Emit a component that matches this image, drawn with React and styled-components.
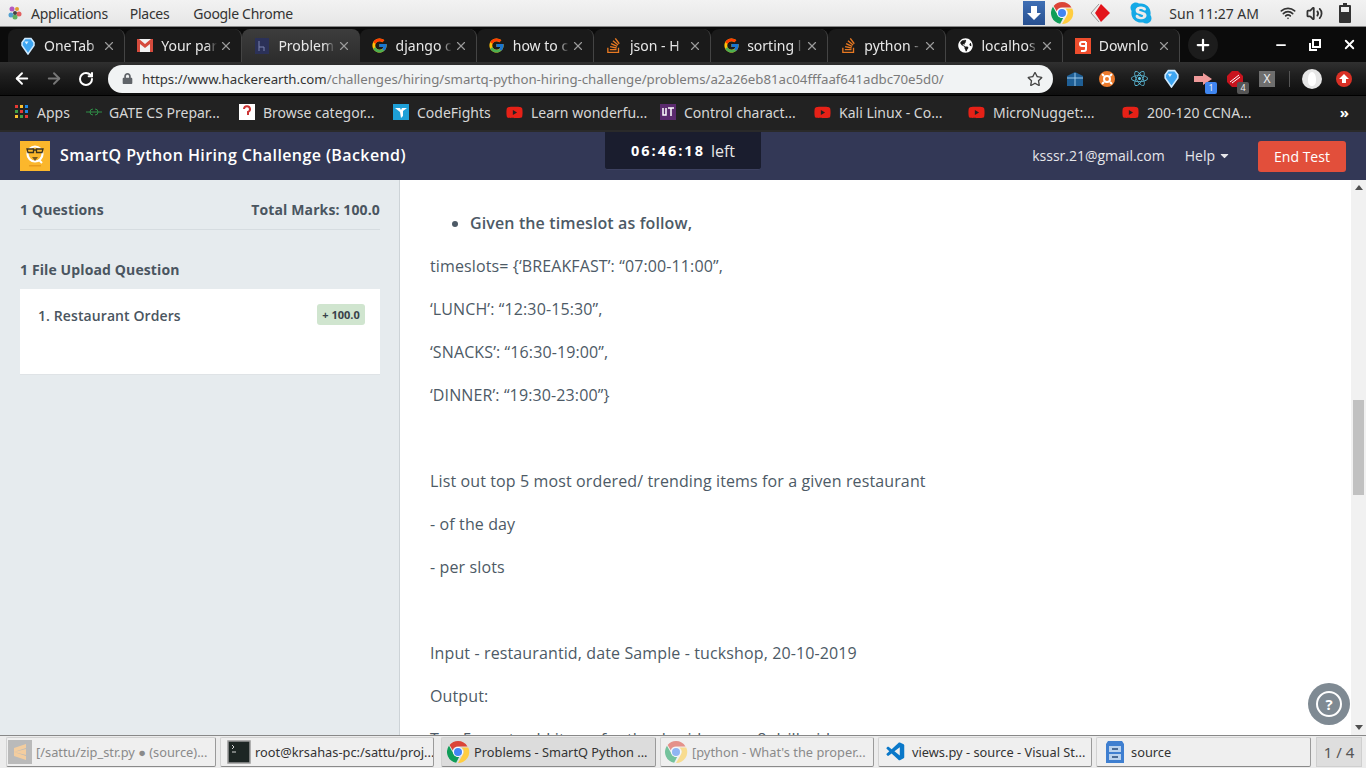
import styled, { createGlobalStyle } from 'styled-components';
import { FcGoogle } from 'react-icons/fc';
import { SiStackoverflow } from 'react-icons/si';
import { VscVscode } from 'react-icons/vsc';
import { FaGlobeAmericas, FaLock, FaRegStar, FaCaretDown, FaYoutube, FaReact, FaSkype } from 'react-icons/fa';
import { ArrowLeft, ArrowRight, RotateCw, X, Plus, Minus, Wifi, Volume2 } from 'lucide-react';

const GlobalStyle = createGlobalStyle`
html, body { margin: 0; padding: 0; overflow: hidden; }
* { box-sizing: border-box; }
body { font-family: "Noto Sans", sans-serif; }
`

const Screen = styled.div`
width: 1366px;
height: 768px;
display: flex;
flex-direction: column;
overflow: hidden;
background: #fff;
`
const TopBar = styled.div`
height: 27px;
flex: none;
display: flex;
align-items: center;
padding: 0 15px 0 7px;
background: linear-gradient(#f2f2f2, #e6e6e6);
border-bottom: 1px solid #888;
color: #3a3a3a;
font-size: 14px;
`
const MenuItem = styled.span`
margin-left: ${p => p.$gap}px;
color: #333;
letter-spacing: -0.3px;
`
const TrayArea = styled.div`
margin-left: auto;
display: flex;
align-items: center;
height: 100%;
`
const TrayClock = styled.span`
margin: 0 21px 0 16px;
color: #333;
`
const TrayDownload = styled.div`
width: 22px;
height: 24px;
margin-right: 5px;
background: linear-gradient(#3f6fb5, #274f8f);
display: flex;
align-items: center;
justify-content: center;
`
const Tabs = styled.div`
height: 35px;
flex: none;
display: flex;
align-items: flex-end;
background: #0b0b0b;
padding-left: 8px;
`
const Tab = styled.div`
width: 117.2px;
height: 33px;
flex: none;
padding: 0 8px 0 11px;
display: flex;
align-items: center;
gap: 7px;
border-radius: 8px 8px 0 0;
background: ${p => (p.$active ? 'linear-gradient(#3d3d3d, #2c2c2c)' : '#1a1a1a')};
border-right: 1px solid ${p => (p.$active ? 'transparent' : '#444')};
color: #e8e8e8;
font-size: 14px;
white-space: nowrap;
`
const TabTitle = styled.span`
flex: 1;
min-width: 0;
overflow: hidden;
-webkit-mask-image: linear-gradient(90deg, #000 82%, transparent);
mask-image: linear-gradient(90deg, #000 82%, transparent);
`
const TabIcon = styled.div`
width: 18px;
height: 18px;
flex: none;
display: flex;
align-items: center;
justify-content: center;
`
const TabClose = styled(X)`
flex: none;
margin-left: -5px;
color: #9a9a9a;
`
const NewTab = styled.div`
width: 30px;
height: 30px;
margin-left: 8px;
margin-bottom: 2px;
border-radius: 50%;
background: #1c1c1c;
display: flex;
align-items: center;
justify-content: center;
color: #fff;
`
const WindowButtons = styled.div`
margin-left: auto;
display: flex;
align-items: center;
gap: 21px;
height: 100%;
padding-right: 9px;
color: #fff;
`
const Toolbar = styled.div`
height: 34px;
flex: none;
display: flex;
align-items: center;
background: linear-gradient(#303030, #1f1f1f 40%, #0e0e0e);
border-bottom: 1px solid #000;
padding-left: 13px;
`
const NavButton = styled.div`
width: 18px;
margin-right: 14px;
display: flex;
justify-content: center;
color: ${p => (p.$off ? '#777' : '#fff')};
`
const Omnibox = styled.div`
width: 945px;
height: 28px;
margin-left: -1px;
padding: 0 10px 0 14px;
border-radius: 14px;
background: #f1f3f4;
display: flex;
align-items: center;
font-size: 13.25px;
color: #7a7a7a;
`
const UrlText = styled.span`
margin-left: 9px;
flex: 1;
white-space: nowrap;
letter-spacing: -0.025px;
`
const UrlHost = styled.span`
color: #333;
`
const Extensions = styled.div`
display: flex;
align-items: center;
padding-left: 6px;
`
const Ext = styled.div`
position: relative;
width: 32px;
height: 24px;
display: flex;
align-items: center;
justify-content: center;
`
const ExtBadge = styled.span`
position: absolute;
right: 2px;
bottom: -3px;
width: 12px;
height: 12px;
border-radius: 2px;
background: ${p => p.$bg};
color: #eee;
font-size: 9px;
line-height: 12px;
text-align: center;
`
const ExtX = styled.div`
width: 16px;
height: 16px;
background: #6e6e6e;
color: #eee;
font-size: 12px;
line-height: 16px;
text-align: center;
`
const ExtDivider = styled.div`
width: 1px;
height: 16px;
background: #555;
margin: 0 12px 0 6px;
`
const Avatar = styled.div`
width: 20px;
height: 20px;
border-radius: 50%;
background: #e6e6e6;
margin-right: 14px;
display: flex;
justify-content: center;
align-items: center;
`
const AvatarFace = styled.div`
width: 8px;
height: 14px;
border-radius: 50% 50% 40% 40%;
background: #fff;
`
const UpdateDot = styled.div`
width: 16px;
height: 16px;
border-radius: 50%;
background: #d93025;
display: flex;
align-items: center;
justify-content: center;
`
const Bookmarks = styled.div`
height: 34px;
flex: none;
display: flex;
align-items: center;
padding: 0 0 2px 15px;
background: #222;
color: #d6d6d6;
font-size: 14px;
white-space: nowrap;
`
const Bookmark = styled.div`
display: flex;
align-items: center;
width: ${p => p.$w}px;
flex: none;
gap: ${p => p.$gap || 8}px;
`
const MoreBookmarks = styled.span`
margin-left: auto;
margin-right: 17px;
color: #fff;
font-weight: 700;
font-size: 15px;
`
const AppsGrid = styled.div`
width: 14px;
height: 14px;
display: grid;
grid-template-columns: repeat(3, 3px);
grid-template-rows: repeat(3, 3px);
gap: 2px;
`
const AppsDot = styled.i`
background: ${p => p.$c};
`
const SiteHeader = styled.header`
height: 50px;
flex: none;
display: flex;
align-items: center;
border-top: 2px solid #2a2a2a;
background: #333856;
padding: 0 20px;
font-family: "Open Sans", sans-serif;
position: relative;
`
const Brand = styled.div`
width: 30px;
height: 30px;
background: #fbb72c;
display: flex;
align-items: center;
justify-content: center;
`
const ChallengeTitle = styled.h1`
margin: 0 0 2px 10px;
font-size: 16px;
font-weight: 600;
letter-spacing: 0.4px;
color: #fff;
`
const Timer = styled.div`
position: absolute;
left: 605px;
top: 0;
width: 156px;
height: 38px;
background: #1a1d2e;
border-radius: 0 0 3px 3px;
border-bottom: 1px solid #3d4160;
color: #e8e8e8;
display: flex;
align-items: center;
justify-content: center;
gap: 6px;
font-size: 16px;
`
const TimerValue = styled.b`
font-weight: 700;
font-size: 14.5px;
letter-spacing: 2px;
color: #fff;
`
const HeaderRight = styled.div`
margin-left: auto;
display: flex;
align-items: center;
font-size: 14px;
color: #e6e6ea;
`
const UserMail = styled.span`
margin-bottom: 2px;
`
const HelpMenu = styled.span`
margin: 0 27px 2px 20px;
display: flex;
align-items: center;
gap: 3px;
`
const EndButton = styled.button`
width: 88px;
height: 31px;
border: 0;
border-radius: 3px;
background: #e24f3b;
color: #fff;
font: 14px "Open Sans", sans-serif;
`
const Main = styled.div`
flex: 1;
min-height: 0;
display: flex;
font-family: "Open Sans", sans-serif;
position: relative;
`
const Sidebar = styled.aside`
width: 400px;
flex: none;
background: #e6ebee;
border-right: 1px solid #cdd3d7;
padding: 0 19px 0 20px;
color: #4a5560;
`
const SummaryRow = styled.div`
height: 50px;
padding-top: 10px;
display: flex;
align-items: center;
justify-content: space-between;
border-bottom: 1px solid #d6dce0;
font-size: 14px;
font-weight: 700;
letter-spacing: 0.12px;
`
const SectionTitle = styled.div`
margin-top: 30px;
height: 29px;
font-size: 14px;
font-weight: 700;
line-height: 20px;
letter-spacing: 0.12px;
`
const QuestionCard = styled.div`
height: 86px;
background: #fff;
border-bottom: 1px solid #dfe3e6;
padding: 15px 15px 0 18px;
display: flex;
justify-content: space-between;
align-items: flex-start;
font-size: 14px;
font-weight: 600;
`
const QuestionName = styled.span`
margin-top: 1px;
line-height: 22px;
letter-spacing: 0.1px;
`
const Marks = styled.span`
width: 48px;
height: 21px;
border-radius: 3px;
background: #d0e5cf;
color: #39424a;
font-size: 11px;
font-weight: 700;
line-height: 21px;
text-align: center;
`
const Content = styled.main`
flex: 1;
min-width: 0;
overflow: hidden;
padding: 31px 30px 0;
color: #4d5a66;
font-size: 16px;
line-height: 25px;
letter-spacing: 0.12px;
`
const Bullets = styled.ul`
margin: 0 0 18px;
padding-left: 40px;
`
const Bullet = styled.li`
font-weight: 600;
`
const Para = styled.p`
margin: 0 0 18px;
min-height: 25px;
white-space: nowrap;
`
const ScrollBar = styled.div`
width: 15px;
flex: none;
background: #f1f1f1;
display: flex;
flex-direction: column;
align-items: center;
justify-content: space-between;
position: relative;
`
const ScrollArrow = styled.div`
width: 0;
height: 0;
margin: 5px 0;
border-left: 4px solid transparent;
border-right: 4px solid transparent;
border-${p => (p.$up ? 'bottom' : 'top')}: 5px solid #505050;
`
const ScrollThumb = styled.div`
position: absolute;
top: 220px;
left: 2px;
width: 11px;
height: 95px;
background: #c1c1c1;
`
const HelpFab = styled.div`
position: absolute;
left: 1308px;
top: 503px;
width: 42px;
height: 42px;
border-radius: 50%;
background: #7f8a93;
display: flex;
align-items: center;
justify-content: center;
`
const HelpRing = styled.div`
width: 26px;
height: 26px;
border: 2px solid #fff;
border-radius: 50%;
color: #fff;
font-size: 15px;
font-weight: 700;
line-height: 22px;
text-align: center;
`
const Taskbar = styled.div`
height: 33px;
flex: none;
display: flex;
align-items: center;
padding: 1px 4px 1px 6px;
background: #ececec;
border-top: 1px solid #888;
font-size: 12.8px;
letter-spacing: 0.01px;
color: #333;
`
const TaskButton = styled.div`
width: ${p => p.$w}px;
margin-right: ${p => p.$mr}px;
height: 30px;
flex: none;
display: flex;
align-items: center;
gap: 4px;
padding: 0 2px 0 ${p => p.$pl}px;
border-radius: 2px;
background: ${p => (p.$active ? '#dcdcdc' : '#efefef')};
border: 1px solid #d2d2d2;
border-right-color: #9a9a9a;
border-bottom-color: #8a8a8a;
white-space: nowrap;
overflow: hidden;
color: ${p => (p.$faded ? '#8a8a8a' : '#333')};
`
const TaskIcon = styled.div`
width: 24px;
height: 24px;
flex: none;
display: flex;
align-items: center;
justify-content: center;
opacity: ${p => (p.$faded ? 0.55 : 1)};
`
const Pager = styled.div`
width: 46px;
height: 30px;
margin-left: auto;
background: #dedede;
border: 1px solid #cfcfcf;
display: flex;
align-items: center;
justify-content: center;
font-size: 15px;
color: #555;
white-space: nowrap;
`

function ChromeIcon({ size = 18 }) {
    return (
        <svg width={size} height={size} viewBox="0 0 48 48">
            <path fill="#db4437" d="M24 2a22 22 0 0 1 19 11H24a11 11 0 0 0-10.500 7.500L7.200 9.800A22 22 0 0 1 24 2z" />
            <path fill="#0f9d58" d="M5.900 11.500L15 27.500a11 11 0 0 0 11.500 6l-6.200 12.200A22 22 0 0 1 5.900 11.500z" />
            <path fill="#ffcd40" d="M44.500 15H31a11 11 0 0 1 2.500 14.500l-9.500 16.500A22 22 0 0 0 44.500 15z" />
            <circle cx="24" cy="24" r="10" fill="#fff" />
            <circle cx="24" cy="24" r="8" fill="#4285f4" />
        </svg>
    );
}

function DiamondIcon({ size = 18 }) {
    return (
        <svg width={size} height={size} viewBox="0 0 18 18">
            <path fill="#3ea6f2" stroke="#cfeaff" strokeWidth="1.500" d="M9 17L3 8.500 3 5.500 6 1.500h6l3 4v3z" />
            <path fill="#d9f0ff" d="M5.500 4.500h4l-2 3z" />
        </svg>
    );
}

function GmailIcon() {
    return (
        <svg width="16" height="13" viewBox="0 0 16 13">
            <rect width="16" height="13" fill="#f2f2f2" />
            <path fill="#d54b3d" d="M0 0h2l6 5 6-5h2v13h-3V5L8 9 3 5v8H0z" />
        </svg>
    );
}

function BatteryIcon() {
    return (
        <svg width="12" height="20" viewBox="0 0 12 20">
            <path fill="#333" d="M4 0h4v2h3a1 1 0 0 1 1 1v16a1 1 0 0 1-1 1H1a1 1 0 0 1-1-1V3a1 1 0 0 1 1-1h3z" />
            <rect x="2" y="4" width="8" height="5" fill="#eee" />
        </svg>
    );
}

function YoutubeMark() {
    return <FaYoutube size={17} color="#e62117" />;
}

function SublimeIcon() {
    return (
        <svg width="24" height="24" viewBox="0 0 24 24">
            <rect width="24" height="24" fill="#8f8f8f" />
            <path fill="#f6b15d" d="M6 8l12-4v4L6 12zM6 12l12 4v4L6 16zM6 12l12-3v6z" />
        </svg>
    );
}

function TerminalIcon() {
    return (
        <svg width="24" height="24" viewBox="0 0 24 24">
            <rect x="1" y="1" width="22" height="22" fill="#1d2624" stroke="#9a9a9a" strokeWidth="1.500" />
            <path stroke="#d5d5d5" fill="none" d="M5 5l2 2-2 2M5 12h4" />
        </svg>
    );
}

function CabinetIcon() {
    return (
        <svg width="20" height="24" viewBox="0 0 20 24">
            <path fill="#3f7fd0" d="M3 1h14l2 3v19H1V4z" />
            <rect x="4" y="6" width="12" height="6" fill="#b9d2ee" />
            <rect x="4" y="14" width="12" height="6" fill="#b9d2ee" />
            <path stroke="#24497a" strokeWidth="1.500" d="M7 9h6M7 17h6" />
        </svg>
    );
}

function GnomeFoot() {
    return (
        <svg width="16" height="16" viewBox="0 0 16 16">
            <circle cx="5" cy="4" r="2.500" fill="#b45ac0" />
            <circle cx="10" cy="4" r="2" fill="#e0a030" />
            <circle cx="12" cy="9" r="2.500" fill="#e26060" />
            <circle cx="4" cy="10" r="2.500" fill="#50a0d0" />
            <circle cx="8" cy="12" r="2.500" fill="#60b060" />
            <circle cx="8" cy="8" r="2" fill="#444" />
        </svg>
    );
}

function MascotLogo() {
    return (
        <svg width="28" height="28" viewBox="0 0 28 28">
            <circle cx="14" cy="12" r="7.500" fill="none" stroke="#fff" strokeWidth="2.200" />
            <path stroke="#fff" strokeWidth="2" d="M18 18l3 3" />
            <path d="M6 7h6.500v3.500H7zM15.500 7H22l-1 3.500h-5.500zM12.500 8h3" fill="#fbb72c" stroke="#3a3320" strokeWidth="1.300" />
            <path d="M11 15l3 4 3-4z" fill="#7a5a20" />
            <path d="M8 23h12v1.500H8z" fill="#e89b1c" />
        </svg>
    );
}

const tabs = [
    { title: 'OneTab', icon: <DiamondIcon /> },
    { title: 'Your par', icon: <GmailIcon /> },
    { title: 'Problem', icon: <svg width="14" height="16" viewBox="0 0 14 16"><rect width="14" height="16" fill="#2b3158" /><path stroke="#7c85b0" fill="none" d="M4 3v10M4 9h5v4" /></svg>, active: true },
    { title: 'django c', icon: <FcGoogle size={17} /> },
    { title: 'how to c', icon: <FcGoogle size={17} /> },
    { title: 'json - H', icon: <SiStackoverflow size={15} color="#e87922" /> },
    { title: 'sorting l', icon: <FcGoogle size={17} /> },
    { title: 'python -', icon: <SiStackoverflow size={15} color="#e87922" /> },
    { title: 'localhos', icon: <FaGlobeAmericas size={15} color="#fff" /> },
    { title: 'Downlo', icon: <svg width="16" height="16" viewBox="0 0 16 16"><rect width="16" height="16" fill="#ee4d2d" /><path fill="none" stroke="#fff" strokeWidth="2" d="M11 4H7a2 2 0 0 0 0 4h4V4v7a2 2 0 0 1-2 2H6" /></svg> },
];

const bookmarks = [
    { title: 'GATE CS Prepar...', w: 154, gap: 6, icon: <svg width="18" height="10" viewBox="0 0 18 10"><path d="M1 5h16M8 2a3 3 0 1 0 0 6M10 2a3 3 0 1 1 0 6" fill="none" stroke="#2f8d46" /></svg> },
    { title: 'Browse categor...', w: 154, icon: <svg width="16" height="16" viewBox="0 0 16 16"><rect width="16" height="16" fill="#fff" /><path d="M5 5a3 3 0 1 1 4 3v3" fill="none" stroke="#c33" strokeWidth="2" /></svg> },
    { title: 'CodeFights', w: 113, icon: <svg width="16" height="16" viewBox="0 0 16 16"><rect width="16" height="16" fill="#1ea0d8" /><path fill="#fff" d="M2 4h5l1 2 1-2h5l-4 3v5l-2 2-1-6z" /></svg> },
    { title: 'Learn wonderfu...', w: 154, icon: <YoutubeMark /> },
    { title: 'Control charact...', w: 154, icon: <svg width="16" height="16" viewBox="0 0 16 16"><rect width="16" height="16" fill="#5b2a6e" /><path d="M3 4v7h3V4M8 4h6M11 4v8" fill="none" stroke="#fff" strokeWidth="1.500" /></svg> },
    { title: 'Kali Linux - Co...', w: 154, icon: <YoutubeMark /> },
    { title: 'MicroNugget:...', w: 154, icon: <YoutubeMark /> },
    { title: '200-120 CCNA...', w: 150, icon: <YoutubeMark /> },
];

const tasks = [
    { title: '[/sattu/zip_str.py ● (source)...', icon: <SublimeIcon />, w: 210, mr: 4, pl: 1, faded: true },
    { title: 'root@krsahas-pc:/sattu/proj...', icon: <TerminalIcon />, w: 214, mr: 7, pl: 6 },
    { title: 'Problems - SmartQ Python ...', icon: <ChromeIcon size={24} />, w: 215, mr: 4, pl: 4, active: true },
    { title: "[python - What's the proper...", icon: <ChromeIcon size={24} />, w: 214, mr: 4, pl: 3, faded: true },
    { title: 'views.py - source - Visual St...', icon: <VscVscode size={22} color="#0a78c9" />, w: 214, mr: 4, pl: 5 },
    { title: 'source', icon: <CabinetIcon />, w: 215, mr: 0, pl: 6 },
];

export default function App() {
    return (
        <Screen>
            <GlobalStyle />
            <TopBar>
                <GnomeFoot />
                <MenuItem $gap={8}>Applications</MenuItem>
                <MenuItem $gap={22}>Places</MenuItem>
                <MenuItem $gap={24}>Google Chrome</MenuItem>
                <TrayArea>
                    <TrayDownload><svg width="16" height="16" viewBox="0 0 16 16"><path fill="#fff" d="M5 1h6v7h4l-7 7-7-7h4z" /></svg></TrayDownload>
                    <ChromeIcon size={24} />
                    <svg width="28" height="24" viewBox="0 0 28 24" style={{ marginLeft: 13 }}><path fill="#e3141b" d="M14 3l9 9-9 9-6-9z" /><path fill="none" stroke="#999" d="M12 3L4 12l8 9" /></svg>
                    <FaSkype size={24} color="#14a9e6" style={{ marginLeft: 14 }} />
                    <TrayClock>Sun 11:27 AM</TrayClock>
                    <Wifi size={16} color="#333" strokeWidth={2.5} />
                    <Volume2 size={17} color="#333" strokeWidth={2.5} style={{ marginLeft: 10 }} />
                    <span style={{ marginLeft: 16, display: 'flex' }}><BatteryIcon /></span>
                </TrayArea>
            </TopBar>
            <Tabs>
                {tabs.map((tab) => (
                    <Tab key={tab.title} $active={tab.active}>
                        <TabIcon>{tab.icon}</TabIcon>
                        <TabTitle>{tab.title}</TabTitle>
                        <TabClose size={14} />
                    </Tab>
                ))}
                <NewTab><Plus size={18} strokeWidth={3} /></NewTab>
                <WindowButtons>
                    <Minus size={14} strokeWidth={3} />
                    <svg width="12" height="12" viewBox="0 0 12 12"><path fill="none" stroke="#fff" strokeWidth="2" d="M4 1h7v7H4zM1 4v7h7" /></svg>
                    <X size={15} strokeWidth={3} />
                </WindowButtons>
            </Tabs>
            <Toolbar>
                <NavButton><ArrowLeft size={19} strokeWidth={2.5} /></NavButton>
                <NavButton $off><ArrowRight size={19} strokeWidth={2.5} /></NavButton>
                <NavButton><RotateCw size={16} strokeWidth={3} /></NavButton>
                <Omnibox>
                    <FaLock size={11} color="#5f6368" />
                    <UrlText><UrlHost>https://www.hackerearth.com</UrlHost>/challenges/hiring/smartq-python-hiring-challenge/problems/a2a26eb81ac04fffaaf641adbc70e5d0/</UrlText>
                    <FaRegStar size={16} color="#444" />
                </Omnibox>
                <Extensions>
                    <Ext><svg width="18" height="16" viewBox="0 0 18 16"><path fill="#1f5f95" d="M1 5l8-4 8 4v10H1z" /><path stroke="#9cc9ea" d="M1 7h16M9 2v13" /></svg></Ext>
                    <Ext><svg width="16" height="16" viewBox="0 0 16 16"><circle cx="8" cy="8" r="8" fill="#ec7a2c" /><circle cx="8" cy="8" r="3" fill="none" stroke="#fff" strokeWidth="2" /><path stroke="#fff" strokeWidth="2" d="M3 3l2 2M13 3l-2 2M3 13l2-2M13 13l-2-2" /></svg></Ext>
                    <Ext><FaReact size={17} color="#61c8e8" /></Ext>
                    <Ext><DiamondIcon size={19} /></Ext>
                    <Ext><svg width="18" height="12" viewBox="0 0 18 12"><path fill="#ef9a9a" d="M0 3h9V0l9 6-9 6V9H0z" /></svg><ExtBadge $bg="#3f86f0">1</ExtBadge></Ext>
                    <Ext><svg width="16" height="16" viewBox="0 0 16 16"><path fill="#c8141e" d="M5 0h6l5 5v6l-5 5H5l-5-5V5z" /><path stroke="#fff" d="M3 11l9-7M5 12l8-6" /></svg><ExtBadge $bg="#555">4</ExtBadge></Ext>
                    <Ext><ExtX>X</ExtX></Ext>
                    <ExtDivider />
                    <Avatar><AvatarFace /></Avatar>
                    <UpdateDot><svg width="10" height="10" viewBox="0 0 10 10"><path fill="#fff" d="M5 0l5 5H7v4H3V5H0z" /></svg></UpdateDot>
                </Extensions>
            </Toolbar>
            <Bookmarks>
                <Bookmark $w={70}>
                    <AppsGrid>
                        {['#e53935', '#fbc02d', '#1e88e5', '#43a047', '#e53935', '#1e88e5', '#fbc02d', '#43a047', '#e53935'].map((c, i) => <AppsDot key={i} $c={c} />)}
                    </AppsGrid>
                    Apps
                </Bookmark>
                {bookmarks.map((b) => (
                    <Bookmark key={b.title} $w={b.w} $gap={b.gap}>{b.icon}{b.title}</Bookmark>
                ))}
                <MoreBookmarks>»</MoreBookmarks>
            </Bookmarks>
            <SiteHeader>
                <Brand><MascotLogo /></Brand>
                <ChallengeTitle>SmartQ Python Hiring Challenge (Backend)</ChallengeTitle>
                <Timer><TimerValue>06:46:18</TimerValue> left</Timer>
                <HeaderRight>
                    <UserMail>ksssr.21@gmail.com</UserMail>
                    <HelpMenu>Help <FaCaretDown size={13} /></HelpMenu>
                    <EndButton>End Test</EndButton>
                </HeaderRight>
            </SiteHeader>
            <Main>
                <Sidebar>
                    <SummaryRow><span>1 Questions</span><span>Total Marks: 100.0</span></SummaryRow>
                    <SectionTitle>1 File Upload Question</SectionTitle>
                    <QuestionCard>
                        <QuestionName>1. Restaurant Orders</QuestionName>
                        <Marks>+ 100.0</Marks>
                    </QuestionCard>
                </Sidebar>
                <Content>
                    <Bullets><Bullet>Given the timeslot as follow,</Bullet></Bullets>
                    <Para>timeslots= {'{'}‘BREAKFAST’: “07:00-11:00”,</Para>
                    <Para>‘LUNCH’: “12:30-15:30”,</Para>
                    <Para>‘SNACKS’: “16:30-19:00”,</Para>
                    <Para>‘DINNER’: “19:30-23:00”{'}'}</Para>
                    <Para />
                    <Para>List out top 5 most ordered/ trending items for a given restaurant</Para>
                    <Para>- of the day</Para>
                    <Para>- per slots</Para>
                    <Para />
                    <Para>Input - restaurantid, date Sample - tuckshop, 20-10-2019</Para>
                    <Para>Output:</Para>
                    <Para>Top 5 most sold items for the day id, name 8 drills, id</Para>
                </Content>
                <ScrollBar>
                    <ScrollArrow $up />
                    <ScrollThumb />
                    <ScrollArrow />
                </ScrollBar>
                <HelpFab><HelpRing>?</HelpRing></HelpFab>
            </Main>
            <Taskbar>
                {tasks.map((t) => (
                    <TaskButton key={t.title} $w={t.w} $mr={t.mr} $pl={t.pl} $active={t.active} $faded={t.faded}>
                        <TaskIcon $faded={t.faded}>{t.icon}</TaskIcon>
                        {t.title}
                    </TaskButton>
                ))}
                <Pager>1 / 4</Pager>
            </Taskbar>
        </Screen>
    );
}
